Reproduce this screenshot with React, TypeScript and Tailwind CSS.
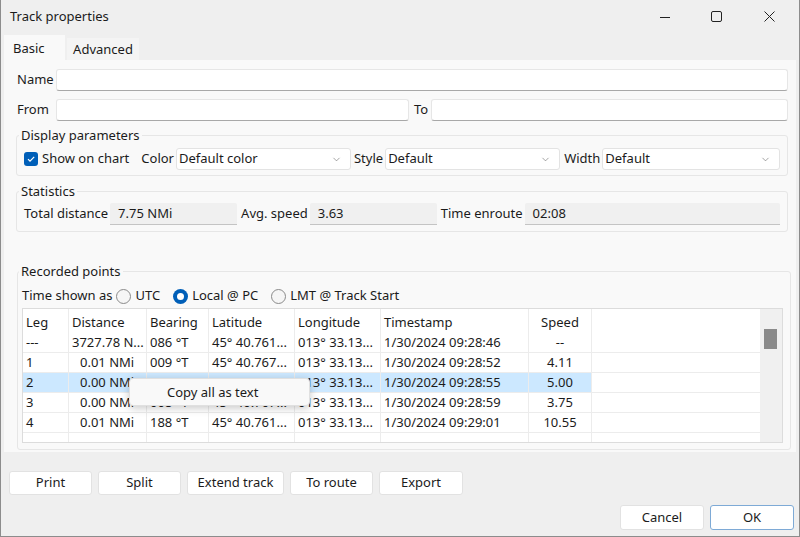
import { ChevronDown } from 'lucide-react';

const font = "font-['Segoe_UI','Noto_Sans',sans-serif]";

const columns = [
  { name: 'Leg', w: 'w-[46px]' },
  { name: 'Distance', w: 'w-[78px]' },
  { name: 'Bearing', w: 'w-[62px]' },
  { name: 'Latitude', w: 'w-[86px]' },
  { name: 'Longitude', w: 'w-[86px]' },
  { name: 'Timestamp', w: 'w-[148px]' },
  { name: 'Speed', w: 'w-[63px]' },
];

const rows = [
  ['---', '3727.78 N...', '086 °T', '45° 40.761...', '013° 33.13...', '1/30/2024 09:28:46', '--'],
  ['1', '0.01 NMi', '009 °T', '45° 40.767...', '013° 33.13...', '1/30/2024 09:28:52', '4.11'],
  ['2', '0.00 NMi', '006 °T', '45° 40.767...', '013° 33.13...', '1/30/2024 09:28:55', '5.00'],
  ['3', '0.00 NMi', '008 °T', '45° 40.767...', '013° 33.13...', '1/30/2024 09:28:59', '3.75'],
  ['4', '0.01 NMi', '188 °T', '45° 40.761...', '013° 33.13...', '1/30/2024 09:29:01', '10.55'],
  ['', '', '', '', '', '', ''],
];

function TextBox({ className }: { className: string }) {
  return (
    <div className={`h-[22px] bg-white border border-[#e6e6e6] border-b-[#a8a8a8] rounded-[3px] ${className}`} />
  );
}

function Select({ value, className }: { value: string; className: string }) {
  return (
    <div className={`h-[22px] bg-white border border-[#e3e3e3] rounded-[3px] flex items-center justify-between pl-[2px] pr-[8px] ${className}`}>
      <span>{value}</span>
      <ChevronDown size={11} strokeWidth={1.2} className="text-[#5a5a5a]" />
    </div>
  );
}

function StatField({ value, className }: { value: string; className: string }) {
  return (
    <div className={`h-[22px] bg-[#f0f0f0] border-b border-[#c4c4c4] rounded-t-[2px] flex items-center pl-[8px] ${className}`}>
      {value}
    </div>
  );
}

function Radio({ checked, label }: { checked?: boolean; label: string }) {
  return (
    <div className="flex items-center gap-[4px]">
      {checked ? (
        <div className="w-[15px] h-[15px] rounded-full bg-[#005fb8] flex items-center justify-center">
          <div className="w-[7px] h-[7px] rounded-full bg-white" />
        </div>
      ) : (
        <div className="w-[15px] h-[15px] rounded-full border border-[#8a8a8a] bg-[#f6f6f6]" />
      )}
      <span>{label}</span>
    </div>
  );
}

function Button({ label, className }: { label: string; className: string }) {
  return (
    <div className={`h-[24px] bg-white border border-[#e2e2e2] rounded-[3px] flex items-center justify-center ${className}`}>
      {label}
    </div>
  );
}

export default function App() {
  return (
    <div className={`${font} text-[13px] text-[#1b1b1b] w-[800px] h-[537px] bg-[#efefef] border-l border-r border-b border-[#8c8c8c] flex flex-col overflow-hidden`}>
      {/* title bar */}
      <div className="h-[32px] flex items-center pl-[9px] pt-[1px] shrink-0">
        <span className="text-[13px]">Track properties</span>
        <div className="ml-auto flex items-center h-full">
          <div className="w-[50px] h-full flex items-center justify-center">
            <svg width="10" height="10" viewBox="0 0 10 10"><path d="M0 5.5h10" stroke="#222" strokeWidth="1" /></svg>
          </div>
          <div className="w-[52px] h-full flex items-center justify-center">
            <svg width="11" height="11" viewBox="0 0 11 11"><rect x="0.5" y="0.5" width="10" height="10" rx="1.5" fill="none" stroke="#222" strokeWidth="1" /></svg>
          </div>
          <div className="w-[54px] h-full flex items-center justify-center mr-[3px]">
            <svg width="11" height="11" viewBox="0 0 11 11"><path d="M0.5 0.5l10 10M10.5 0.5l-10 10" stroke="#222" strokeWidth="1" /></svg>
          </div>
        </div>
      </div>

      {/* tabs */}
      <div className="h-[28px] flex items-end pl-[3px] shrink-0">
        <div className="w-[61px] h-[25px] bg-[#f9f9f9] flex items-center pl-[9px] pt-[2px]">Basic</div>
        <div className="ml-[2px] w-[72px] h-[22px] bg-[#f4f4f4] flex items-center justify-center pt-[2px]">Advanced</div>
      </div>

      {/* panel */}
      <div className="mx-[3px] h-[392px] bg-[#f9f9f9] pt-[9px] pl-[13px] pr-[8px] flex flex-col shrink-0">
        <div className="flex items-center">
          <span className="w-[39px]">Name</span>
          <TextBox className="flex-1" />
        </div>
        <div className="flex items-center mt-[8px]">
          <span className="w-[39px]">From</span>
          <TextBox className="w-[353px]" />
          <span className="w-[22px] pl-[5px]">To</span>
          <TextBox className="flex-1" />
        </div>

        <fieldset className="mt-[5px] border border-[#e6e6e6] rounded-[3px] pb-[5px] px-[7px] ml-[-1px]">
          <legend className="leading-[18px] ml-[-5px] px-[2px]">Display parameters</legend>
          <div className="flex items-center mt-[4px]">
            <div className="w-[14px] h-[14px] rounded-[3px] bg-[#005fb8] flex items-center justify-center">
              <svg width="10" height="10" viewBox="0 0 10 10"><path d="M2 5.2l2 2L8.2 2.8" fill="none" stroke="white" strokeWidth="1.2" /></svg>
            </div>
            <span className="ml-[4px]">Show on chart</span>
            <span className="ml-[12px] mr-[2px]">Color</span>
            <Select value="Default color" className="w-[175px]" />
            <span className="ml-[3px] mr-[2px]">Style</span>
            <Select value="Default" className="w-[175px]" />
            <span className="ml-[4px] mr-[2px]">Width</span>
            <Select value="Default" className="flex-1" />
          </div>
        </fieldset>

        <fieldset className="mt-[6px] border border-[#e6e6e6] rounded-[3px] pb-[6px] px-[7px] ml-[-1px]">
          <legend className="leading-[18px] ml-[-5px] px-[2px]">Statistics</legend>
          <div className="flex items-center mt-[3px]">
            <span className="mr-[2px]">Total distance</span>
            <StatField value="7.75 NMi" className="w-[127px]" />
            <span className="ml-[4px] mr-[2px]">Avg. speed</span>
            <StatField value="3.63" className="w-[127px]" />
            <span className="ml-[4px] mr-[2px]">Time enroute</span>
            <StatField value="02:08" className="flex-1" />
          </div>
        </fieldset>

        <fieldset className="mt-[30px] border border-[#e6e6e6] rounded-[3px] pb-[6px] pl-[4px] pr-[7px] mr-[-3px]">
          <legend className="leading-[18px] ml-[-3px] px-[2px]">Recorded points</legend>
          <div className="flex items-center h-[20px] mt-[6px] gap-[3px]">
            <span className="mr-[1px]">Time shown as</span>
            <Radio label="UTC" />
            <div className="ml-[10px]"><Radio checked label="Local @ PC" /></div>
            <div className="ml-[10px]"><Radio label="LMT @ Track Start" /></div>
          </div>

          <div className="relative mt-[2px] h-[135px] border border-[#dcdcdc] bg-white flex overflow-hidden">
            <div className="flex-1 flex flex-col">
              <div className="h-[24px] flex shrink-0">
                {columns.map((c) => (
                  <div key={c.name} className={`${c.w} h-full border-r border-[#ececec] flex items-center pt-[3px] ${c.name === 'Speed' ? 'justify-center' : 'pl-[3px]'}`}>
                    {c.name}
                  </div>
                ))}
              </div>
              {rows.map((r, i) => (
                <div key={i} className={`h-[20px] flex shrink-0 ${i < 5 ? 'border-b border-[#ececec]' : ''}`}>
                  {r.map((cell, j) => {
                    const sel = i === 2;
                    let pad = 'pl-[3px]';
                    if (j === 1 && i > 0) pad = 'pl-[11px]';
                    if (j === 6) pad = 'justify-center';
                    return (
                      <div
                        key={j}
                        className={`${columns[j].w} h-full border-r border-[#ececec] flex items-center whitespace-nowrap overflow-hidden ${pad} ${sel ? 'bg-[#cce8ff]' : ''}`}
                      >
                        {cell}
                      </div>
                    );
                  })}
                </div>
              ))}
            </div>
            {/* scrollbar */}
            <div className="w-[22px] bg-[#f0f0f0] shrink-0 pl-[4px] pt-[20px]">
              <div className="w-[13px] h-[20px] bg-[#8a8a8a]" />
            </div>

            {/* context menu */}
            <div className="absolute left-[106px] top-[69px] w-[181px] h-[28px] bg-[#f9f9f9] rounded-[4px] shadow-[0_2px_8px_rgba(0,0,0,0.22)] border border-[#e0e0e0] flex items-center pl-[37px] pt-[2px]">
              Copy all as text
            </div>
          </div>
        </fieldset>
      </div>

      {/* action buttons */}
      <div className="flex gap-[6px] pl-[8px] mt-[19px] shrink-0">
        <Button label="Print" className="w-[83px]" />
        <Button label="Split" className="w-[83px]" />
        <Button label="Extend track" className="w-[97px]" />
        <Button label="To route" className="w-[83px]" />
        <Button label="Export" className="w-[84px]" />
      </div>

      <div className="flex justify-end gap-[6px] pr-[5px] mt-[10px] shrink-0">
        <div className="w-[84px] h-[25px] bg-white border border-[#e2e2e2] rounded-[3px] flex items-center justify-center">Cancel</div>
        <div className="w-[84px] h-[25px] bg-white border border-[#7eaad6] rounded-[3px] flex items-center justify-center">OK</div>
      </div>
    </div>
  );
}
